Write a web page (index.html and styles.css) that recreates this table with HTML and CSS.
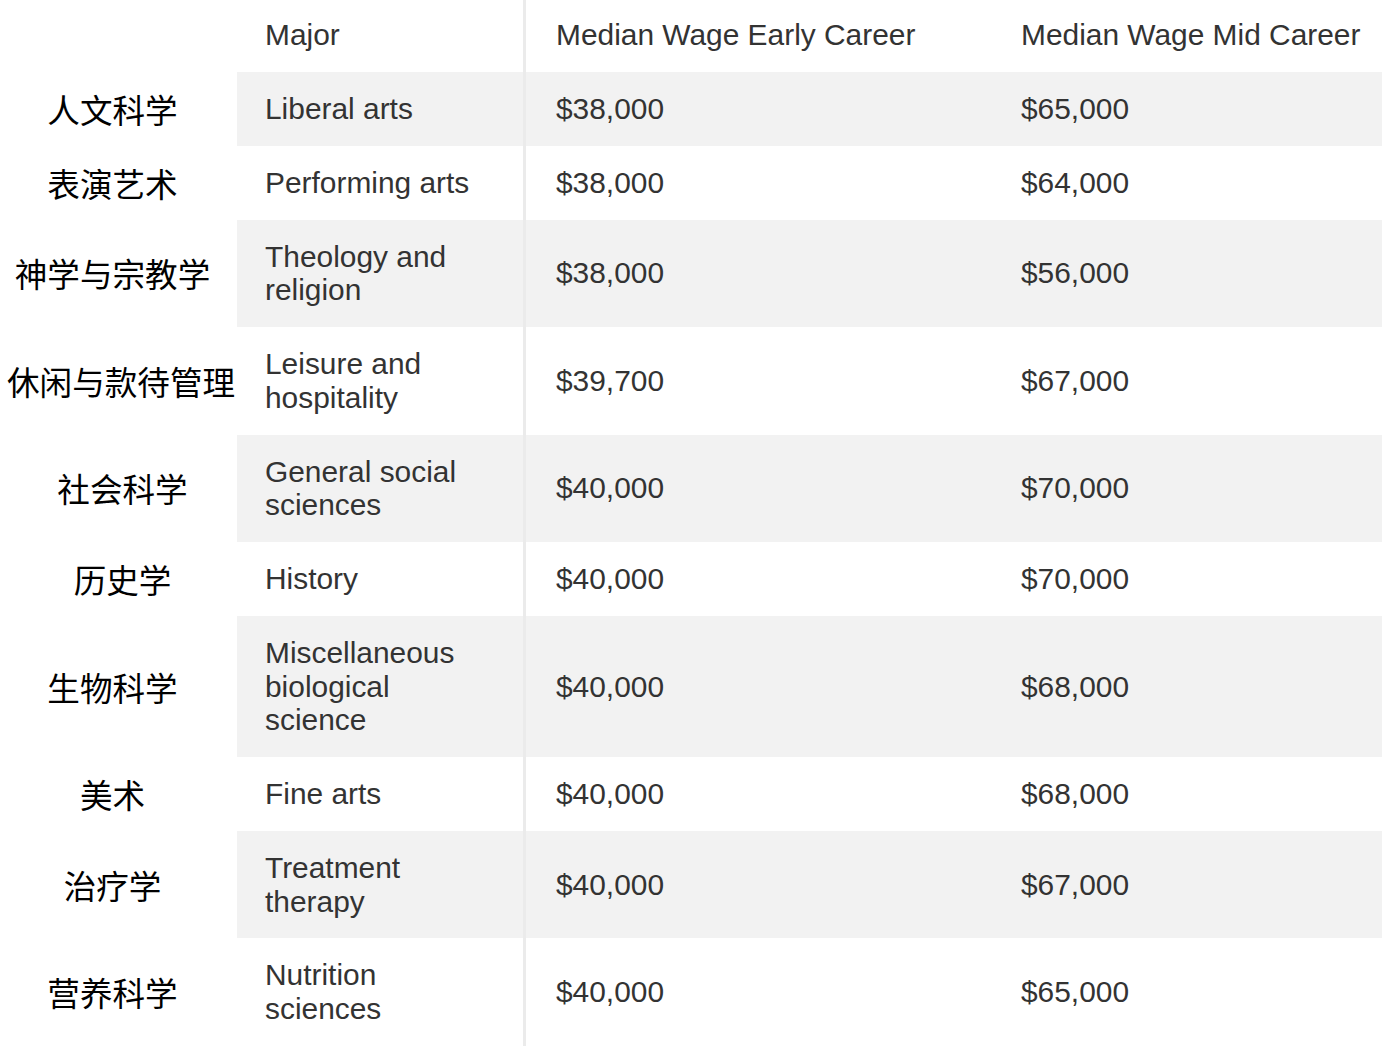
FILE: index.html
```html
<!DOCTYPE html>
<html lang="zh">
<head>
<meta charset="utf-8">
<title>Median Wage by Major</title>
<link rel="stylesheet" href="styles.css">
</head>
<body>
<div class="table">
  <div class="row head">
    <div class="label"></div>
    <div class="cell major">Major</div>
    <div class="cell early">Median Wage Early Career</div>
    <div class="cell mid">Median Wage Mid Career</div>
  </div>
  <div class="row alt">
    <div class="label">人文科学</div>
    <div class="cell major">Liberal arts</div>
    <div class="cell early">$38,000</div>
    <div class="cell mid">$65,000</div>
  </div>
  <div class="row">
    <div class="label">表演艺术</div>
    <div class="cell major">Performing arts</div>
    <div class="cell early">$38,000</div>
    <div class="cell mid">$64,000</div>
  </div>
  <div class="row alt">
    <div class="label">神学与宗教学</div>
    <div class="cell major">Theology and religion</div>
    <div class="cell early">$38,000</div>
    <div class="cell mid">$56,000</div>
  </div>
  <div class="row">
    <div class="label wide">休闲与款待管理</div>
    <div class="cell major">Leisure and hospitality</div>
    <div class="cell early">$39,700</div>
    <div class="cell mid">$67,000</div>
  </div>
  <div class="row alt">
    <div class="label shift">社会科学</div>
    <div class="cell major">General social sciences</div>
    <div class="cell early">$40,000</div>
    <div class="cell mid">$70,000</div>
  </div>
  <div class="row">
    <div class="label shift">历史学</div>
    <div class="cell major">History</div>
    <div class="cell early">$40,000</div>
    <div class="cell mid">$70,000</div>
  </div>
  <div class="row alt">
    <div class="label">生物科学</div>
    <div class="cell major">Miscellaneous biological science</div>
    <div class="cell early">$40,000</div>
    <div class="cell mid">$68,000</div>
  </div>
  <div class="row">
    <div class="label">美术</div>
    <div class="cell major">Fine arts</div>
    <div class="cell early">$40,000</div>
    <div class="cell mid">$68,000</div>
  </div>
  <div class="row alt">
    <div class="label">治疗学</div>
    <div class="cell major">Treatment therapy</div>
    <div class="cell early">$40,000</div>
    <div class="cell mid">$67,000</div>
  </div>
  <div class="row">
    <div class="label">营养科学</div>
    <div class="cell major">Nutrition sciences</div>
    <div class="cell early">$40,000</div>
    <div class="cell mid">$65,000</div>
  </div>
</div>
</body>
</html>
```

FILE: styles.css
```css
html, body {
  margin: 0;
  padding: 0;
  background: #ffffff;
}

body {
  font-family: "Liberation Sans", Arial, sans-serif;
  color: #333333;
  font-size: 29.9px;
  line-height: 33.75px;
}

.table {
  width: 1382px;
}

.row {
  display: grid;
  grid-template-columns: 237px 286px 470px 1fr;
}

.label {
  display: flex;
  align-items: center;
  justify-content: center;
  padding-right: 12px;
  font-family: "Noto Sans CJK SC", "Noto Sans", sans-serif;
  font-size: 32.6px;
  line-height: 33.75px;
  color: #000000;
  white-space: nowrap;
}

.label.shift {
  padding-left: 8px;
  padding-right: 0;
}

.label.wide {
  justify-content: flex-start;
  padding-left: 7px;
  padding-right: 0;
}

.cell {
  display: flex;
  align-items: center;
  padding: 20px 0;
}

.head .cell {
  height: 72px;
  padding-top: 0;
  padding-bottom: 2px;
  box-sizing: border-box;
}

.major {
  padding-left: 28px;
  padding-right: 40px;
}

.early {
  border-left: 3px solid #ebebeb;
  padding-left: 30px;
}

.mid {
  padding-left: 28px;
}

.alt .cell {
  background: #f2f2f2;
}
```
